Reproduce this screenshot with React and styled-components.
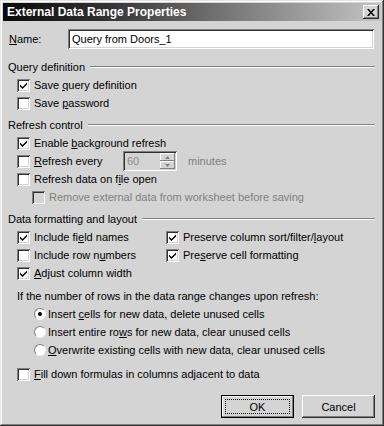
import React from 'react'
import styled, { createGlobalStyle } from 'styled-components'

const GlobalStyle = createGlobalStyle`
  body {
    margin: 0;
    background: #d4d4d4;
    font-family: "Liberation Sans", Arial, sans-serif;
    font-size: 11px;
    color: #000;
  }
`

const Window = styled.div`
  width: 384px;
  height: 426px;
  box-sizing: border-box;
  padding: 3px;
  background: #d4d4d4;
  box-shadow: inset -1px -1px #303030, inset 1px 1px #e4e4e4,
    inset -2px -2px #808080, inset 2px 2px #ffffff;
  display: flex;
  flex-direction: column;
`

const TitleBar = styled.div`
  height: 18px;
  display: flex;
  align-items: center;
  justify-content: space-between;
  padding: 0 2px 0 4px;
  background: linear-gradient(to right, #0a0a0a 0%, #2e2e2e 25%, #6e6e6e 55%, #c4c4c4 100%);
`

const Title = styled.span`
  color: #fff;
  font-weight: bold;
  font-size: 12px;
`

const CloseButton = styled.div`
  width: 16px;
  height: 14px;
  box-sizing: border-box;
  background: #d4d4d4;
  box-shadow: inset -1px -1px #303030, inset 1px 1px #ffffff, inset -2px -2px #808080;
  display: flex;
  align-items: center;
  justify-content: center;
`

const Body = styled.div`
  padding: 8px 6px 0 5px;
  display: flex;
  flex-direction: column;
`

const NameRow = styled.div`
  height: 20px;
  display: flex;
  align-items: center;
  padding-left: 1px;
`

const NameLabel = styled.span`
  width: 59px;
`

const TextBox = styled.div`
  flex: 1;
  height: 20px;
  box-sizing: border-box;
  background: #fff;
  padding: 0 4px;
  display: flex;
  align-items: center;
  box-shadow: inset 1px 1px #808080, inset -1px -1px #ffffff, inset 2px 2px #303030, inset -2px -2px #d4d4d4;
  margin-right: 1px;
`

const GroupHeader = styled.div`
  height: 18px;
  display: flex;
  align-items: center;
  margin-top: ${p => p.$gap}px;

  &::after {
    content: '';
    flex: 1;
    margin-left: 5px;
    border-top: 1px solid #808080;
    border-bottom: 1px solid #ffffff;
  }
`

const Row = styled.div`
  height: 18px;
  display: flex;
  align-items: center;
  padding-left: ${p => p.$indent || 9}px;
  margin-top: ${p => p.$gap || 0}px;
  color: ${p => (p.$disabled ? '#808080' : '#000')};
`

const Label = styled.span`
  white-space: pre;
`

const Grid = styled.div`
  display: grid;
  grid-template-columns: 149px 1fr;
  padding-left: 9px;
`

const Cell = styled.div`
  height: 18px;
  display: flex;
  align-items: center;
`

const Box = styled.span`
  width: 13px;
  height: 13px;
  box-sizing: border-box;
  flex: none;
  margin-right: 4px;
  background: ${p => (p.$disabled ? '#d4d4d4' : '#fff')};
  box-shadow: inset 1px 1px #808080, inset -1px -1px #ffffff, inset 2px 2px #303030, inset -2px -2px #d4d4d4;
  display: flex;
  align-items: center;
  justify-content: center;
`

const RadioDot = styled.span`
  width: 12px;
  height: 12px;
  box-sizing: border-box;
  flex: none;
  margin-right: 2px;
  border-radius: 50%;
  background: #fff;
  border: 1px solid;
  border-color: #808080 #f4f4f4 #f4f4f4 #808080;
  display: flex;
  align-items: center;
  justify-content: center;

  &::after {
    content: '';
    width: 4px;
    height: 4px;
    border-radius: 50%;
    background: ${p => (p.$checked ? '#000' : 'transparent')};
  }
`

const SpinLabel = styled.span`
  width: 89px;
`

const Spin = styled.div`
  width: 54px;
  height: 20px;
  box-sizing: border-box;
  background: #d4d4d4;
  color: #8a8a8a;
  display: flex;
  align-items: center;
  padding: 2px;
  box-shadow: inset 1px 1px #808080, inset -1px -1px #ffffff, inset 2px 2px #303030, inset -2px -2px #d4d4d4;
`

const SpinValue = styled.span`
  flex: 1;
  padding-left: 2px;
`

const SpinButtons = styled.div`
  width: 15px;
  height: 16px;
  display: flex;
  flex-direction: column;
`

const SpinHalf = styled.div`
  flex: 1;
  background: #d4d4d4;
  box-shadow: inset -1px -1px #808080, inset 1px 1px #ffffff;
  display: flex;
  align-items: center;
  justify-content: center;
`

const Minutes = styled.span`
  margin-left: 11px;
  color: #808080;
`

const Buttons = styled.div`
  display: flex;
  justify-content: flex-end;
  gap: 8px;
  margin-top: 12px;
`

const Button = styled.div`
  width: 73px;
  height: 23px;
  box-sizing: border-box;
  display: flex;
  align-items: center;
  justify-content: center;
  background: #d4d4d4;
  box-shadow: ${p =>
    p.$default
      ? 'inset 0 0 0 1px #000, inset -2px -2px #808080, inset 2px 2px #ffffff'
      : 'inset -1px -1px #303030, inset 1px 1px #ffffff, inset -2px -2px #808080'};
  position: relative;

  ${p =>
    p.$default &&
    `&::before {
      content: '';
      position: absolute;
      inset: 4px;
      border: 1px dotted #000;
    }`}
`

const Check = () => (
  <svg width="9" height="9" viewBox="0 0 9 9">
    <path d="M1 3.5 L3.5 6 L8 1.5 L8 3.5 L3.5 8 L1 5.5 Z" fill="#000" />
  </svg>
)

const CheckBox = ({ checked, disabled, children }) => (
  <>
    <Box $disabled={disabled}>{checked && <Check />}</Box>
    <Label>{children}</Label>
  </>
)

const Radio = ({ checked, children }) => (
  <>
    <RadioDot $checked={checked} />
    <Label>{children}</Label>
  </>
)

const Tri = ({ up }) => (
  <svg width="5" height="3" viewBox="0 0 5 3">
    <path d={up ? 'M2.5 0 L5 3 L0 3 Z' : 'M0 0 L5 0 L2.5 3 Z'} fill="#808080" />
  </svg>
)

const App = () => (
  <>
    <GlobalStyle />
    <Window>
      <TitleBar>
        <Title>External Data Range Properties</Title>
        <CloseButton>
          <svg width="8" height="7" viewBox="0 0 8 7">
            <path d="M0 0 L2 0 L4 2.5 L6 0 L8 0 L5 3.5 L8 7 L6 7 L4 4.5 L2 7 L0 7 L3 3.5 Z" fill="#000" />
          </svg>
        </CloseButton>
      </TitleBar>
      <Body>
        <NameRow>
          <NameLabel><u>N</u>ame:</NameLabel>
          <TextBox>Query from Doors_1</TextBox>
        </NameRow>

        <GroupHeader $gap={9}>Query definition</GroupHeader>
        <Row><CheckBox checked>Save <u>q</u>uery definition</CheckBox></Row>
        <Row><CheckBox>Save <u>p</u>assword</CheckBox></Row>

        <GroupHeader $gap={4}>Refresh control</GroupHeader>
        <Row><CheckBox checked>Enable <u>b</u>ackground refresh</CheckBox></Row>
        <Row>
          <Box />
          <SpinLabel><u>R</u>efresh every</SpinLabel>
          <Spin>
            <SpinValue>60</SpinValue>
            <SpinButtons>
              <SpinHalf><Tri up /></SpinHalf>
              <SpinHalf><Tri /></SpinHalf>
            </SpinButtons>
          </Spin>
          <Minutes>minutes</Minutes>
        </Row>
        <Row><CheckBox>Refresh data on f<u>i</u>le open</CheckBox></Row>
        <Row $indent={24} $disabled>
          <CheckBox disabled>Remove external data from worksheet before saving</CheckBox>
        </Row>

        <GroupHeader $gap={4}>Data formatting and layout</GroupHeader>
        <Grid>
          <Cell><CheckBox checked>Include fi<u>e</u>ld names</CheckBox></Cell>
          <Cell><CheckBox checked>Preserve column sort/filter/<u>l</u>ayout</CheckBox></Cell>
          <Cell><CheckBox>Include row n<u>u</u>mbers</CheckBox></Cell>
          <Cell><CheckBox checked>Pre<u>s</u>erve cell formatting</CheckBox></Cell>
          <Cell><CheckBox checked><u>A</u>djust column width</CheckBox></Cell>
        </Grid>

        <Row $gap={5}>If the number of rows in the data range changes upon refresh:</Row>
        <Row $indent={26}><Radio checked>Insert <u>c</u>ells for new data, delete unused cells</Radio></Row>
        <Row $indent={26}><Radio>Insert entire ro<u>w</u>s for new data, clear unused cells</Radio></Row>
        <Row $indent={26}><Radio><u>O</u>verwrite existing cells with new data, clear unused cells</Radio></Row>

        <Row $gap={6}><CheckBox><u>F</u>ill down formulas in columns adjacent to data</CheckBox></Row>

        <Buttons>
          <Button $default>OK</Button>
          <Button>Cancel</Button>
        </Buttons>
      </Body>
    </Window>
  </>
)

export default App
